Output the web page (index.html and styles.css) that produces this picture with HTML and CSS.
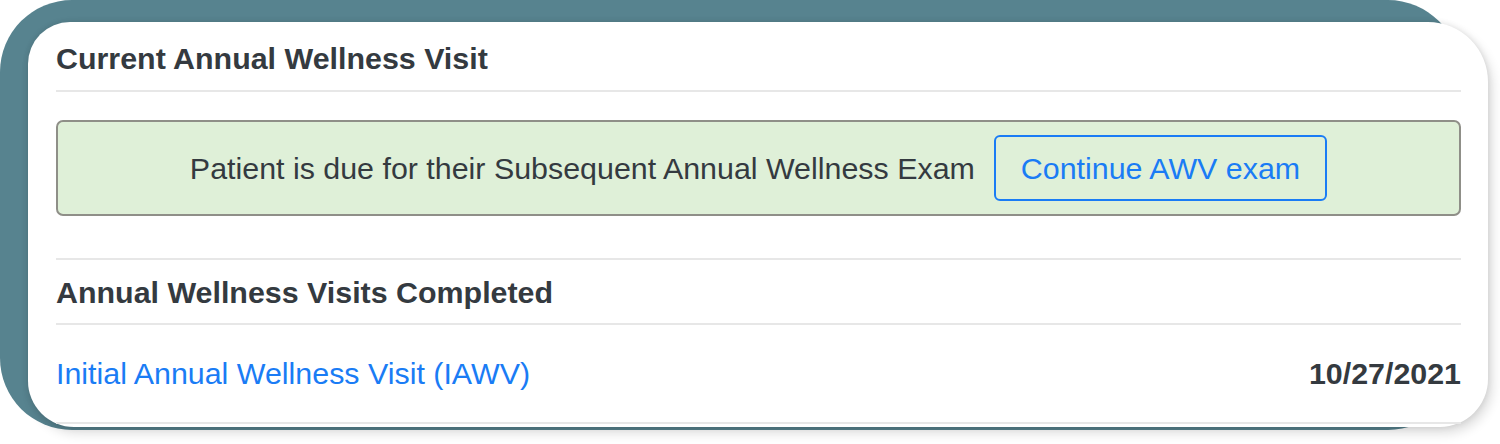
FILE: index.html
```html
<!DOCTYPE html>
<html>
<head>
<meta charset="utf-8">
<link rel="stylesheet" href="styles.css">
</head>
<body>
<div class="frame">
  <div class="card">
    <div class="section-head first">
      <h2>Current Annual Wellness Visit</h2>
    </div>
    <div class="alert">
      <span class="alert-text">Patient is due for their Subsequent Annual Wellness Exam</span>
      <button class="btn-outline">Continue AWV exam</button>
    </div>
    <div class="section-head second">
      <h2>Annual Wellness Visits Completed</h2>
    </div>
    <div class="visit-row">
      <a class="visit-link" href="#">Initial Annual Wellness Visit (IAWV)</a>
      <span class="visit-date">10/27/2021</span>
    </div>
  </div>
</div>
</body>
</html>
```

FILE: styles.css
```css
html, body {
  margin: 0;
  padding: 0;
  background: #ffffff;
  width: 1500px;
  height: 444px;
  overflow: hidden;
  font-family: "Liberation Sans", Arial, sans-serif;
}

.frame {
  width: 1460px;
  height: 430px;
  box-sizing: border-box;
  padding: 22px 0 0 28px;
  background: #57838f;
  border-radius: 72px;
  display: flex;
}

.card {
  flex: 0 0 1460px;
  height: 405px;
  box-sizing: border-box;
  background: #ffffff;
  border-radius: 42px 60px 48px 46px;
  box-shadow: 4px 6px 12px rgba(0, 0, 0, 0.14), 0 0 6px rgba(0, 0, 0, 0.10);
  padding: 0 27px 0 28px;
  display: flex;
  flex-direction: column;
}

.section-head h2 {
  margin: 0;
  font-size: 30.4px;
  line-height: 36px;
  font-weight: bold;
  color: #343a40;
}

.section-head.first {
  padding: 17.5px 0 14.5px;
  border-bottom: 2px solid #e7e7e7;
}

.section-head.second {
  margin-top: 42px;
  padding: 13.5px 0 13.5px;
  border-top: 2px solid #e7e7e7;
  border-bottom: 2px solid #e7e7e7;
}

.alert {
  margin-top: 28px;
  height: 96px;
  box-sizing: border-box;
  background: #dff0d8;
  border: 2px solid #8f8f88;
  border-radius: 7px;
  display: flex;
  align-items: center;
  justify-content: center;
  gap: 19px;
}

.alert-text {
  font-size: 30.4px;
  color: #343a40;
}

.btn-outline {
  font-family: "Liberation Sans", Arial, sans-serif;
  font-size: 30.4px;
  color: #1a7cf5;
  background: transparent;
  border: 2px solid #1a7cf5;
  border-radius: 6px;
  height: 66px;
  padding: 0 25px;
}

.visit-row {
  height: 99px;
  box-sizing: border-box;
  border-bottom: 2px solid #e7e7e7;
  display: flex;
  align-items: center;
  justify-content: space-between;
  padding-bottom: 1px;
}

.visit-link {
  font-size: 30.4px;
  color: #1a7cf5;
  text-decoration: none;
}

.visit-date {
  font-size: 30.4px;
  font-weight: bold;
  color: #343a40;
}
```
